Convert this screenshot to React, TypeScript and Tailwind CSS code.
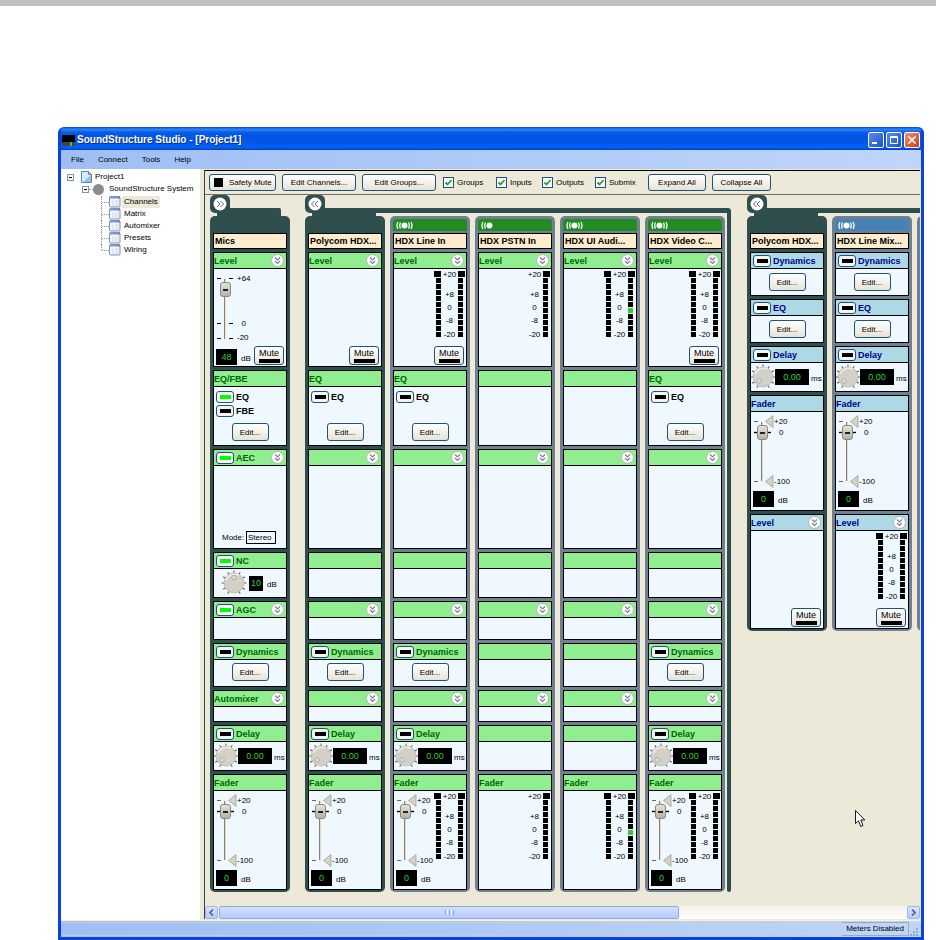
import React from "react";

type Tone = "input" | "output";

const TONES = {
  input: { header: "bg-[#90ee90]", text: "text-[#006400]", band: "bg-[#228b22]" },
  output: { header: "bg-[#add8e6]", text: "text-[#00008b]", band: "bg-[#4682b4]" },
};

const BUTTON =
  "rounded-[3px] border border-[#1c5180] bg-linear-to-b from-white to-[#e6e3d6] text-center text-black";

function Chevron() {
  return (
    <button type="button" aria-label="Collapse section" className="mr-[2px] size-[13px] shrink-0">
      <svg viewBox="0 0 13 13" className="size-[13px]" fill="none">
        <circle cx="6.5" cy="6.5" r="6" fill="#fff" stroke="#b0b4b8" />
        <path d="M4 3.5 6.5 6 9 3.5M4 7 6.5 9.5 9 7" stroke="#7b7f86" strokeWidth="1.1" />
      </svg>
    </button>
  );
}

function Toggle({ on, label }: { on?: boolean; label: string }) {
  return (
    <button
      type="button"
      aria-label={label}
      aria-pressed={!!on}
      className="flex h-[12px] w-[18px] shrink-0 items-center justify-center rounded-[3px] border border-[#1c5180] bg-[#f5f4ee]"
    >
      <span className={on ? "h-[4px] w-[11px] bg-[#00ff00]" : "h-[4px] w-[11px] bg-black"} />
    </button>
  );
}

function Readout({ value, size }: { value: string; size: string }) {
  return (
    <output className={`flex items-center justify-center bg-black text-[9px] leading-none text-[#32cd32] ${size}`}>
      {value}
    </output>
  );
}

function EditButton() {
  return (
    <button type="button" className={`${BUTTON} mx-auto h-[18px] w-[37px] leading-[15px]`}>
      Edit...
    </button>
  );
}

function MuteButton() {
  return (
    <button
      type="button"
      className={`${BUTTON} ml-auto flex h-[19px] w-[30px] flex-col items-center justify-between pb-px text-[9px]`}
    >
      <span className="leading-[12px]">Mute</span>
      <span className="h-[4px] w-[21px] bg-black" />
    </button>
  );
}

const RANGE =
  "absolute top-0 left-[5px] h-[75px] w-[11px] appearance-none [direction:rtl] [writing-mode:vertical-lr] bg-transparent [&::-webkit-slider-thumb]:h-[15px] [&::-webkit-slider-thumb]:w-[11px] [&::-webkit-slider-thumb]:appearance-none [&::-webkit-slider-thumb]:rounded-[3px] [&::-webkit-slider-thumb]:border [&::-webkit-slider-thumb]:border-[#8a887e] [&::-webkit-slider-thumb]:bg-[linear-gradient(#222,#222),linear-gradient(#e4e2da,#b4b1a5)] [&::-webkit-slider-thumb]:bg-[size:5px_2px,100%_100%] [&::-webkit-slider-thumb]:bg-center [&::-webkit-slider-thumb]:bg-no-repeat";

function GainSlider() {
  return (
    <div className="flex pt-[2px] pl-px">
      <div className="relative h-[75px] w-[22px] shrink-0">
        <svg viewBox="0 0 22 75" className="h-[75px] w-[22px]">
          <path d="M9.500 8V68" stroke="#85807a" />
          <path d="M10.500 8V68" stroke="#f8dfb8" />
          <path d="M2 7.500h4M14 7.500h4M2 52.500h4M14 52.500h4M2 67.500h4M14 67.500h4" stroke="#000" />
        </svg>
        <input type="range" aria-label="Gain" min={-20} max={64} defaultValue={48} className={RANGE} />
      </div>
      <div className="leading-[10px]">
        <div className="mt-[3px]">+64</div>
        <div className="mt-[35px] text-center">0</div>
        <div className="mt-[4px]">-20</div>
      </div>
    </div>
  );
}

function FaderSlider() {
  return (
    <div className="flex pt-[2px] pl-px">
      <div className="relative h-[75px] w-[22px] shrink-0">
        <svg viewBox="0 0 22 75" className="h-[75px] w-[22px]">
          <path d="M9.500 8V67" stroke="#85807a" />
          <path d="M10.500 8V67" stroke="#e8d8bc" />
          <path d="M2 7.500h4M2 67.500h4" stroke="#666" />
          <path d="M2 18.500h17" stroke="#000" strokeWidth="1.400" />
          <path
            d="M21 1.500 13.500 7.500 21 13.500zM21 61.500 13.500 67.500 21 73.500z"
            fill="#d5d2c6"
            stroke="#98958a"
            strokeWidth=".7"
          />
        </svg>
        <input type="range" aria-label="Fader" min={0} max={100} defaultValue={81} className={RANGE} />
      </div>
      <div className="leading-[10px]">
        <div className="mt-[3px]">+20</div>
        <div className="mt-px pl-[5px]">0</div>
        <div className="mt-[39px]">-100</div>
      </div>
    </div>
  );
}

const SEGMENTS = [0, 1, 2, 3, 4, 5, 6, 7, 8, 9, 10];

function MeterBar({ side, lit }: { side: "left" | "right"; lit?: number }) {
  return (
    <div className={side === "left" ? "flex flex-col items-end gap-px" : "flex flex-col items-start gap-px"}>
      {SEGMENTS.map((n) => (
        <span
          key={n}
          className={
            n === 0
              ? "h-[6px] w-[7px] bg-black"
              : n === lit
                ? "h-[5px] w-[5px] bg-[#32cd32]"
                : "h-[5px] w-[5px] bg-black"
          }
        />
      ))}
    </div>
  );
}

function Meter({ stereo, lit }: { stereo: boolean; lit?: number }) {
  return (
    <div className="ml-auto flex shrink-0 pt-[2px] pr-px">
      {stereo && <MeterBar side="left" />}
      <div className="w-[17px] text-center leading-[8px]">
        <div>+20</div>
        <div className="mt-[12px]">+8</div>
        <div className="mt-[5px]">0</div>
        <div className="mt-[5px]">-8</div>
        <div className="mt-[6px]">-20</div>
      </div>
      <MeterBar side="right" lit={lit} />
    </div>
  );
}

const TICKS = [-150, -120, -90, -60, -30, 0, 30, 60, 90, 120, 150];

function Knob({ angle }: { angle: number }) {
  return (
    <svg viewBox="-13 -13 26 26" className="size-[26px] shrink-0">
      {TICKS.map((a) => (
        <path key={a} d="M0 -12.500V-9" stroke="#555" strokeWidth=".9" transform={`rotate(${a})`} />
      ))}
      <circle r="10" fill="#d3d0c7" stroke="#b5b2a8" strokeWidth=".7" />
      <path d="M-8 -3A9 9 0 0 1 5 -7.500" stroke="#efede6" strokeWidth="1.500" fill="none" />
      <circle cy="-5.500" r="2.300" fill="#dddbd3" stroke="#aaa79d" strokeWidth=".8" transform={`rotate(${angle})`} />
    </svg>
  );
}

interface SectionProps {
  title?: string;
  led?: "on" | "off";
  chevron?: boolean;
  tone?: Tone;
  height: string;
  children?: React.ReactNode;
}

function Section({ title, led, chevron, tone = "input", height, children }: SectionProps) {
  const t = TONES[tone];
  return (
    <section className={`flex flex-col border border-black bg-[#f0f8ff] ${height}`}>
      <header className={`flex h-[16px] shrink-0 items-center border-b border-black ${t.header}`}>
        {led && (
          <span className="mr-[2px] ml-[2px] flex">
            <Toggle on={led === "on"} label={title ?? ""} />
          </span>
        )}
        <h3 className={`flex-1 text-[9px] leading-[14px] font-bold ${t.text}`}>{title}</h3>
        {chevron && <Chevron />}
      </header>
      <div className="flex min-h-0 flex-1 flex-col">{children}</div>
    </section>
  );
}

function DelayBody() {
  return (
    <div className="flex items-center pt-px">
      <span className="-ml-px">
        <Knob angle={-135} />
      </span>
      <Readout value="0.00" size="h-[16px] w-[34px] -ml-px" />
      <span className="ml-[2px] pt-[3px]">ms</span>
    </div>
  );
}

function DbReadout({ value }: { value: string }) {
  return (
    <div className="flex items-end pl-[2px]">
      <Readout value={value} size="h-[16px] w-[21px]" />
      <span className="ml-[4px] leading-[12px]">dB</span>
    </div>
  );
}

interface Channel {
  name: string;
  master?: boolean;
  mics?: boolean;
  signal?: "stereo" | "mono";
  processing?: boolean;
  lit?: number;
}

function Strip({ channel, tone, children }: { channel: Channel; tone: Tone; children: React.ReactNode }) {
  return (
    <article
      className={`flex w-[80px] shrink-0 flex-col gap-[3px] rounded-[5px] px-[3px] pt-[3px] pb-[2px] ${
        channel.master ? "bg-[#2f4f4f]" : "bg-[#708090]"
      }`}
    >
      <div
        className={`-mb-px flex h-[12px] items-center rounded-t-[3px] pl-[3px] ${channel.signal ? TONES[tone].band : ""}`}
      >
        {channel.signal && (
          <svg viewBox="0 0 17 9" className="h-[9px] w-[17px]" fill="none" stroke="#fff">
            <circle cx="8.500" cy="4.500" r="3" fill="#fff" stroke="none" />
            <path d="M2 1Q0 4.500 2 8M4.500 1.500Q3 4.500 4.500 7.500" strokeWidth="1.300" />
            {channel.signal === "stereo" && (
              <path d="M15 1Q17 4.500 15 8M12.500 1.500Q14 4.500 12.500 7.500" strokeWidth="1.300" />
            )}
          </svg>
        )}
      </div>
      <h2 className="h-[16px] border border-black bg-[#ffebcd] pl-px text-[9px] leading-[14px] font-bold whitespace-nowrap">
        {channel.name}
      </h2>
      {children}
    </article>
  );
}

function InputStrip({ channel }: { channel: Channel }) {
  const { mics, processing, signal } = channel;
  const meter = signal ? <Meter stereo={signal === "stereo"} lit={channel.lit} /> : null;
  return (
    <Strip channel={channel} tone="input">
      <Section title="Level" chevron height="h-[115px]">
        <div className="flex">
          {mics && <GainSlider />}
          {meter}
        </div>
        <div className="mt-auto flex items-end pr-[2px] pb-px">
          {mics && <DbReadout value="48" />}
          {processing && <MuteButton />}
        </div>
      </Section>
      <Section title={mics ? "EQ/FBE" : processing ? "EQ" : undefined} height="h-[76px]">
        {processing && (
          <>
            <div className="flex flex-col gap-[2px] pt-[4px] pl-[2px] text-[9px] leading-[12px] font-bold">
              <div className="flex gap-[2px]">
                <Toggle on={mics} label="EQ enable" />
                EQ
              </div>
              {mics && (
                <div className="flex gap-[2px]">
                  <Toggle label="FBE enable" />
                  FBE
                </div>
              )}
            </div>
            <div className="mt-auto flex pb-[4px]">
              <EditButton />
            </div>
          </>
        )}
      </Section>
      <Section title={mics ? "AEC" : undefined} led={mics ? "on" : undefined} chevron height="h-[100px]">
        {mics && (
          <label className="mt-auto flex items-center pb-[4px] pl-[8px]">
            <span className="w-[24px]">Mode:</span>
            <select className="h-[13px] w-[30px] appearance-none border border-black bg-[#f0f8ff] pl-px leading-[11px]">
              <option>Stereo</option>
            </select>
          </label>
        )}
      </Section>
      <Section title={mics ? "NC" : undefined} led={mics ? "on" : undefined} height="h-[46px]">
        {mics && (
          <div className="flex items-center pt-px pl-[7px]">
            <Knob angle={0} />
            <Readout value="10" size="h-[15px] w-[14px] ml-[2px]" />
            <span className="ml-[4px] pt-[3px]">dB</span>
          </div>
        )}
      </Section>
      <Section title={mics ? "AGC" : undefined} led={mics ? "on" : undefined} chevron height="h-[39px]" />
      <Section title={processing ? "Dynamics" : undefined} led={processing ? "off" : undefined} height="h-[44px]">
        {processing && (
          <div className="flex pt-[3px]">
            <EditButton />
          </div>
        )}
      </Section>
      <Section title={mics ? "Automixer" : undefined} chevron height="h-[32px]" />
      <Section title={processing ? "Delay" : undefined} led={processing ? "off" : undefined} height="h-[46px]">
        {processing && <DelayBody />}
      </Section>
      <Section title="Fader" height="h-[116px]">
        <div className="flex">
          {processing && <FaderSlider />}
          {meter}
        </div>
        <div className="mt-auto pb-[3px]">{processing && <DbReadout value="0" />}</div>
      </Section>
    </Strip>
  );
}

function OutputStrip({ channel }: { channel: Channel }) {
  return (
    <Strip channel={channel} tone="output">
      <Section title="Dynamics" led="off" tone="output" height="h-[44px]">
        <div className="flex pt-[4px]">
          <EditButton />
        </div>
      </Section>
      <Section title="EQ" led="off" tone="output" height="h-[44px]">
        <div className="flex pt-[4px]">
          <EditButton />
        </div>
      </Section>
      <Section title="Delay" led="off" tone="output" height="h-[46px]">
        <DelayBody />
      </Section>
      <Section title="Fader" tone="output" height="h-[116px]">
        <FaderSlider />
        <div className="mt-auto pb-[3px]">
          <DbReadout value="0" />
        </div>
      </Section>
      <Section title="Level" chevron tone="output" height="h-[115px]">
        {channel.signal && <Meter stereo />}
        <div className="mt-auto flex pr-[2px] pb-px">
          <MuteButton />
        </div>
      </Section>
    </Strip>
  );
}

interface GroupProps {
  name: string;
  collapsed?: boolean;
  closed?: boolean;
  children: React.ReactNode;
}

function Group({ name, collapsed, closed, children }: GroupProps) {
  return (
    <div className="shrink-0">
      <div className="flex items-start">
        <button
          type="button"
          aria-label={`${collapsed ? "Expand" : "Collapse"} ${name}`}
          className="flex h-[18px] w-[20px] items-center justify-center rounded-[5px] rounded-br-none bg-[#2f4f4f]"
        >
          <svg viewBox="0 0 14 14" className="size-[14px]" fill="none">
            <circle cx="7" cy="7" r="6.500" fill="#fff" />
            {collapsed ? (
              <path d="M4 4 7 7 4 10M7.500 4 10.500 7 7.500 10" stroke="#666" />
            ) : (
              <path d="M6.500 4 3.500 7 6.500 10M10 4 7 7 10 10" stroke="#666" />
            )}
          </svg>
        </button>
        <div
          className={`mt-[13px] h-[5px] flex-1 bg-[#2f4f4f] ${
            collapsed ? "mr-[9px] rounded-tr-[2px]" : closed ? "rounded-tr-[3px]" : ""
          }`}
        />
      </div>
      <div className="ml-[7px] h-[3px] w-[64px] bg-[#2f4f4f]" />
      <div className="flex gap-[5px]">
        {children}
        {closed && <div className="-mt-[3px] -ml-[3px] w-[4px] rounded-b-[2px] bg-[#2f4f4f]" />}
      </div>
    </div>
  );
}

const INPUTS: Channel[] = [
  { name: "Polycom HDX...", master: true, processing: true },
  { name: "HDX Line In", signal: "stereo", processing: true },
  { name: "HDX PSTN In", signal: "mono" },
  { name: "HDX UI Audi...", signal: "stereo", lit: 6 },
  { name: "HDX Video C...", signal: "stereo", processing: true },
];

const OUTPUTS: Channel[] = [
  { name: "Polycom HDX...", master: true },
  { name: "HDX Line Mix...", signal: "stereo" },
];

function Expander() {
  return (
    <svg viewBox="0 0 7 7" className="size-[7px] shrink-0" fill="none">
      <rect x=".5" y=".5" width="6" height="6" fill="#fff" stroke="#8595ad" />
      <path d="M2 3.500h3" stroke="#000" />
    </svg>
  );
}

function PageIcon() {
  return (
    <svg viewBox="0 0 12 12" className="size-[12px] shrink-0" fill="none">
      <rect x=".5" y=".5" width="10.500" height="10.500" rx="1" fill="#f4f6fb" stroke="#7b93b8" />
      <path d="M1 1.500h10" stroke="#6f9ad8" strokeWidth="2" />
      <path d="M9 1.500h1.500" stroke="#d9442b" strokeWidth="1.500" />
      <path d="M3 5h2M6 5h3.500M3 7h2M6 7h3.500M3 9h2M6 9h3.500" stroke="#d3d6de" />
    </svg>
  );
}

function ProjectTree() {
  return (
    <nav aria-label="Project" className="w-[139px] shrink-0 bg-white pt-[2px] pl-[6px] leading-[12px] whitespace-nowrap">
      <div className="flex h-[12px] items-center">
        <Expander />
        <svg viewBox="0 0 12 12" className="ml-[6px] size-[12px] shrink-0" fill="none">
          <path d="M1.500.5h7l3 3v8h-10z" fill="#d8ebfc" stroke="#5b86bd" />
          <path d="M11 4v7H3z" fill="#8fc1ee" />
          <path d="M8.500.5v3h3" stroke="#5b86bd" />
        </svg>
        <span className="ml-[3px]">Project1</span>
      </div>
      <div className="ml-[15px] flex h-[12px] items-center">
        <Expander />
        <span className="w-[4px] border-t border-dotted border-[#999]" />
        <span className="size-[11px] shrink-0 rounded-full bg-[#8c8c8c]" />
        <span className="ml-[5px]">SoundStructure System</span>
      </div>
      <ul className="mt-px ml-[34px]">
        {["Channels", "Matrix", "Automixer", "Presets", "Wiring"].map((item, i) => (
          <li key={item} className="flex h-[12px] items-center">
            <span
              className={
                i === 4
                  ? "h-[6px] self-start border-l border-dotted border-[#999]"
                  : "h-[12px] border-l border-dotted border-[#999]"
              }
            />
            <span className="w-[7px] border-t border-dotted border-[#999]" />
            <PageIcon />
            <a href="#" className={i === 0 ? "ml-px bg-[#ece9d8] px-[2px]" : "ml-px px-[2px]"}>
              {item}
            </a>
          </li>
        ))}
      </ul>
    </nav>
  );
}

function CheckBox({ label, width }: { label: string; width: string }) {
  return (
    <label className={`flex items-center gap-[3px] ${width}`}>
      <span className="grid size-[11px]">
        <input
          type="checkbox"
          defaultChecked
          className="peer col-start-1 row-start-1 size-[11px] appearance-none border border-[#1c5180] bg-white"
        />
        <svg
          viewBox="0 0 11 11"
          className="pointer-events-none invisible col-start-1 row-start-1 size-[11px] peer-checked:visible"
          fill="none"
        >
          <path d="M2.500 5.500 4.500 7.500 8.500 3" stroke="#21a121" strokeWidth="1.800" />
        </svg>
      </span>
      <span>{label}</span>
    </label>
  );
}

function Toolbar() {
  return (
    <div className="flex h-[25px] items-center border-y border-t-black border-b-[#716f64] pl-[4px] whitespace-nowrap">
      <button type="button" className={`${BUTTON} flex h-[17px] w-[67px] items-center gap-[6px] pl-[4px]`}>
        <span className="size-[9px] shrink-0 bg-black" />
        Safety Mute
      </button>
      <button type="button" className={`${BUTTON} ml-[6px] h-[17px] w-[74px] leading-[15px]`}>
        Edit Channels...
      </button>
      <button type="button" className={`${BUTTON} ml-[6px] h-[17px] w-[74px] leading-[15px]`}>
        Edit Groups...
      </button>
      <div className="ml-[7px] flex">
        <CheckBox label="Groups" width="w-[53px]" />
        <CheckBox label="Inputs" width="w-[46px]" />
        <CheckBox label="Outputs" width="w-[53px]" />
        <CheckBox label="Submix" width="w-[53px]" />
      </div>
      <button type="button" className={`${BUTTON} h-[17px] w-[58px] leading-[15px]`}>
        Expand All
      </button>
      <button type="button" className={`${BUTTON} ml-[6px] h-[17px] w-[59px] leading-[15px]`}>
        Collapse All
      </button>
    </div>
  );
}

function ScrollArrow({ right }: { right?: boolean }) {
  return (
    <button
      type="button"
      aria-label={right ? "Scroll right" : "Scroll left"}
      className="flex size-[13px] shrink-0 items-center justify-center rounded-[2px] border border-[#9fb5ee] bg-linear-to-b from-[#dbe5fe] to-[#b5c9fa]"
    >
      <svg viewBox="0 0 7 7" className="size-[7px]" fill="none" stroke="#4d6185" strokeWidth="1.600">
        <path d={right ? "M2 .5 5 3.500 2 6.500" : "M5 .5 2 3.500 5 6.500"} />
      </svg>
    </button>
  );
}

function ScrollBar() {
  return (
    <div className="flex h-[13px] gap-px bg-linear-to-b from-[#f3f2ec] to-[#fefefb]">
      <ScrollArrow />
      <div className="flex-1">
        <div className="flex h-[13px] w-[67%] items-center justify-center gap-px rounded-[2px] border border-[#8ea9ea] bg-linear-to-b from-[#d2defe] to-[#b8cafa]">
          <span className="h-[5px] w-px bg-[#8ea9ea]" />
          <span className="h-[5px] w-px bg-[#f0f5ff]" />
          <span className="h-[5px] w-px bg-[#8ea9ea]" />
          <span className="h-[5px] w-px bg-[#f0f5ff]" />
          <span className="h-[5px] w-px bg-[#8ea9ea]" />
        </div>
      </div>
      <ScrollArrow right />
    </div>
  );
}

function TitleBar() {
  const frame = "flex size-[16px] items-center justify-center rounded-[2px] border border-white";
  return (
    <header className="flex h-[23px] items-center rounded-t-[5px] bg-[linear-gradient(#0845c4,#2a86fb_10%,#0459e6_25%,#0254e4_60%,#0262f8_88%,#0140c0)] pt-[3px] pr-px pl-px">
      <svg viewBox="0 0 13 11" className="h-[11px] w-[13px]">
        <path d="M0 0h13v7H0z" fill="#000" />
        <path d="M0 7h13v4H0z" fill="#444" />
        <path d="M8 7h2v4H8z" fill="#32cd32" />
      </svg>
      <h1 className="ml-[2px] flex-1 text-[10px] leading-[14px] font-bold text-white [text-shadow:1px_1px_#0a2a8a]">
        SoundStructure Studio - [Project1]
      </h1>
      <div className="flex gap-[2px]">
        <button type="button" aria-label="Minimize" className={`${frame} bg-linear-to-br from-[#5c8cf0] to-[#1c4fd0]`}>
          <svg viewBox="0 0 10 10" className="size-[10px]">
            <path d="M1 8h5" stroke="#fff" strokeWidth="2" />
          </svg>
        </button>
        <button type="button" aria-label="Maximize" className={`${frame} bg-linear-to-br from-[#5c8cf0] to-[#1c4fd0]`}>
          <svg viewBox="0 0 10 10" className="size-[10px]" fill="none" stroke="#fff">
            <path d="M1.500 1.500h7v7h-7zM1.500 2.500h7" />
          </svg>
        </button>
        <button type="button" aria-label="Close" className={`${frame} bg-linear-to-br from-[#f09070] to-[#c83a14]`}>
          <svg viewBox="0 0 10 10" className="size-[10px]" stroke="#fff" strokeWidth="1.700">
            <path d="M1.500 1.500 8.500 8.500M8.500 1.500 1.500 8.500" />
          </svg>
        </button>
      </div>
    </header>
  );
}

export default function App() {
  return (
    <div className="bg-white text-[8px] text-black font-['Liberation_Sans',Arial,sans-serif]">
      <div className="h-[6px] bg-[#c0c0c0]" />
      <div className="mt-[121px] mr-[12px] ml-[58px] overflow-hidden rounded-t-[6px] border-x-[3px] border-b-[3px] border-[#0a43d8]">
        <div className="-mx-[3px] bg-[#0a43d8] px-[3px]">
          <TitleBar />
        </div>
        <nav
          aria-label="Menu"
          className="flex h-[19px] items-center gap-[14px] bg-linear-to-r from-[#9ebef5] to-[#bfd5fa] pl-[10px]"
        >
          <button type="button">File</button>
          <button type="button">Connect</button>
          <button type="button">Tools</button>
          <button type="button">Help</button>
        </nav>
        <main className="flex bg-[#ece9d8]">
          <ProjectTree />
          <div className="mt-px mr-px mb-px ml-[4px] min-w-0 flex-1 border-l border-[#404040]">
            <Toolbar />
            <div className="relative flex items-start overflow-hidden pb-[14px] pl-[5px]">
              <Group name="Mics" collapsed>
                <InputStrip channel={{ name: "Mics", master: true, mics: true, processing: true }} />
              </Group>
              <div className="ml-[15px]">
                <Group name="input group" closed>
                  {INPUTS.map((c) => (
                    <InputStrip key={c.name} channel={c} />
                  ))}
                </Group>
              </div>
              <div className="ml-[16px]">
                <Group name="output group">
                  {OUTPUTS.map((c) => (
                    <OutputStrip key={c.name} channel={c} />
                  ))}
                  <div className="w-[80px] rounded-[5px] bg-[#708090]" />
                </Group>
              </div>
              <svg viewBox="0 0 11 18" className="absolute top-[615px] left-[650px] h-[18px] w-[11px]">
                <path
                  d="M.5.500V13.500L3.500 10.800 5.800 16.500 8 15.500 5.800 10H9.800z"
                  fill="#fff"
                  stroke="#000"
                  strokeWidth=".9"
                />
              </svg>
            </div>
            <ScrollBar />
          </div>
        </main>
        <footer className="flex h-[17px] items-stretch border-t border-[#f4f3ea] bg-linear-to-r from-[#9ebef5] to-[#bfd5fa] pr-[2px]">
          <div className="my-px flex-1 border border-[#cfcdbc] border-l-transparent" />
          <div className="my-px border border-l-0 border-[#aca899] px-[4px] leading-[12px]">Meters Disabled</div>
          <svg viewBox="0 0 9 9" className="ml-px size-[9px] self-end">
            <path d="M6 0h2v2H6zM3 3h2v2H3zM6 3h2v2H6zM0 6h2v2H0zM3 6h2v2H3zM6 6h2v2H6z" fill="#8fa6cc" />
          </svg>
        </footer>
      </div>
    </div>
  );
}
